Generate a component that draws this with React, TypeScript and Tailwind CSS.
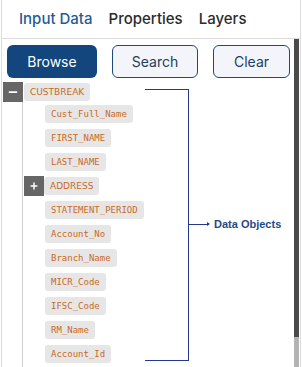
import { Minus, Plus } from "lucide-react";

const children = [
  { name: "Cust_Full_Name" },
  { name: "FIRST_NAME" },
  { name: "LAST_NAME" },
  { name: "ADDRESS", parent: true },
  { name: "STATEMENT_PERIOD" },
  { name: "Account_No" },
  { name: "Branch_Name" },
  { name: "MICR_Code" },
  { name: "IFSC_Code" },
  { name: "RM_Name" },
  { name: "Account_Id" },
];

function Label({ text, parent }: { text: string; parent?: boolean }) {
  return (
    <span
      className={
        "h-[18px] px-[6px] flex items-center rounded-[3px] bg-[#e6e6e6] text-[#c96a27] leading-none " +
        (parent
          ? "font-['DejaVu_Sans',sans-serif] text-[9px]"
          : "font-['DejaVu_Sans_Mono',monospace] text-[9px]")
      }
    >
      {text}
    </span>
  );
}

export default function App() {
  return (
    <div className="w-[302px] h-[367px] bg-white overflow-hidden relative font-['Inter',sans-serif]">
      <div className="ml-px w-[300px] h-full border-x border-[#dcdcdc] flex flex-col">
        <div className="h-[39px] shrink-0 flex items-center gap-[16px] pl-[17px] border-b border-[#dcdcdc] text-[15px] font-medium text-[#2b2b2b]">
          <span className="text-[#1f5c96]">Input Data</span>
          <span>Properties</span>
          <span>Layers</span>
        </div>

        <div className="flex flex-1 min-h-0">
          <div className="flex-1 flex flex-col">
            <div className="flex gap-[15px] pl-[5px] pt-[6px]">
              <button className="w-[90px] h-[33px] rounded-[6px] bg-[#12467d] text-white text-[14px]">
                Browse
              </button>
              <button className="w-[86px] h-[33px] rounded-[6px] border border-[#1d4a7c] bg-[#f4f5fa] text-[#1f3d5e] text-[14px]">
                Search
              </button>
              <button className="w-[77px] h-[33px] rounded-[6px] border border-[#1d4a7c] bg-[#f4f5fa] text-[#1f3d5e] text-[14px]">
                Clear
              </button>
            </div>

            <div className="pl-px pt-[4px]">
              <div className="flex items-center h-[20px]">
                <span className="w-[20px] h-[20px] bg-[#666666] flex items-center justify-center">
                  <Minus size={12} strokeWidth={3.5} color="#ffffff" />
                </span>
                <span className="ml-px">
                  <Label text="CUSTBREAK" parent />
                </span>
              </div>
              <div className="ml-[19px] border-l border-[#cfcfcf] pt-[3px] pb-[10px] flex flex-col gap-[6px]">
                {children.map((c) =>
                  c.parent ? (
                    <div key={c.name} className="flex items-center h-[18px] pl-px">
                      <span className="w-[20px] h-[20px] bg-[#666666] flex items-center justify-center">
                        <Plus size={10} strokeWidth={3.5} color="#ffffff" />
                      </span>
                      <Label text={c.name} parent />
                    </div>
                  ) : (
                    <div key={c.name} className="flex h-[18px] pl-[22px]">
                      <Label text={c.name} />
                    </div>
                  )
                )}
              </div>
            </div>
          </div>

          <div className="w-[5px] flex flex-col mr-px">
            <div className="flex-1 bg-[#4a4a4a]" />
            <div className="h-[30px] bg-[#b3b3b3]" />
          </div>
        </div>
      </div>

      <div className="absolute left-[145px] top-[89px] w-[44px] h-[272px] border-y border-r border-[#26388c]" />
      <div className="absolute left-[189px] top-[218px] flex items-center h-[12px]">
        <div className="w-[18px] h-px bg-[#26388c]" />
        <div className="w-0 h-0 border-y-[2px] border-y-transparent border-l-[3px] border-l-[#26388c]" />
        <span className="ml-[4px] text-[11px] font-bold text-[#1f4a86] font-['Liberation_Sans',Arial,sans-serif] leading-none">
          Data Objects
        </span>
      </div>
    </div>
  );
}
